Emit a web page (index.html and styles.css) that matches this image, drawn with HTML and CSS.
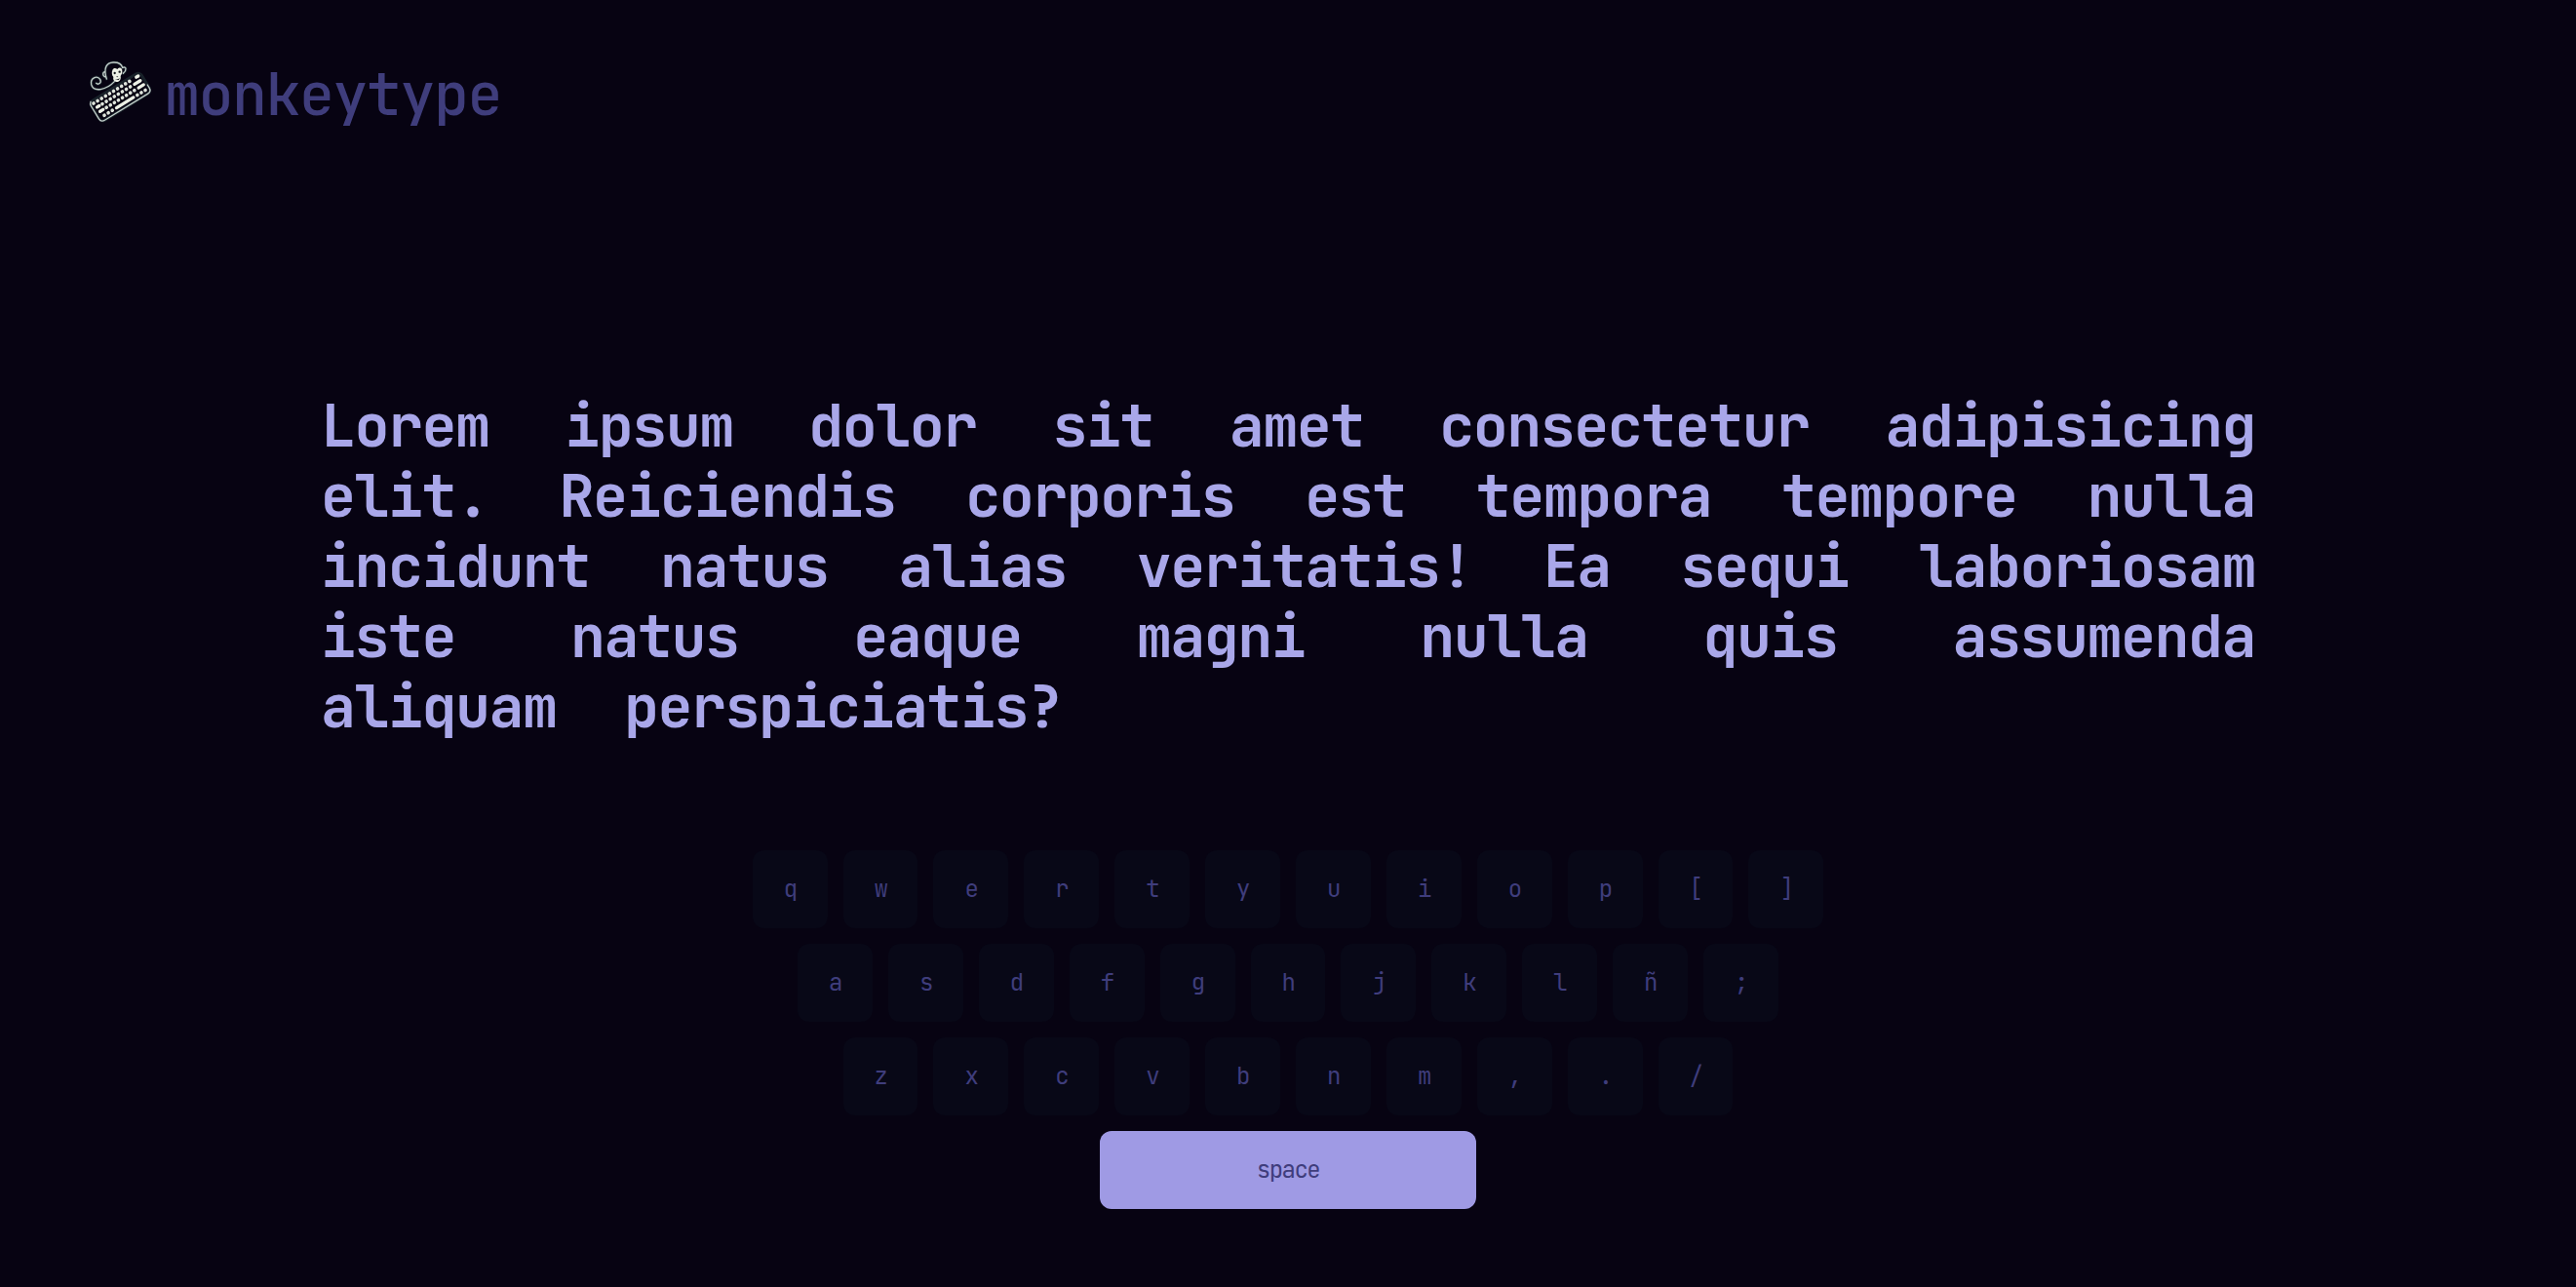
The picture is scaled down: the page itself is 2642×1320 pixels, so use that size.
FILE: index.html
```
<!DOCTYPE html>
<html lang="en">
<head>
<meta charset="utf-8">
<title>monkeytype</title>
<link rel="stylesheet" href="styles.css">
</head>
<body>
<header class="header">
  <svg class="logo" viewBox="0 0 270 255" aria-hidden="true">
    <g class="glow">
      <path d="M112 101C88 127 47 135 41 110C37 91 58 80 68 94C74 106 62 112 56 106"/>
      <path d="M88 93C77 57 89 43 108 42C125 41 134 48 137 58C149 53 151 66 139 76M84 70C74 72 75 86 86 87"/>
      <rect x="-10" y="-9" width="181" height="71" rx="13" transform="translate(48 168) rotate(-31.5)"/>
    </g>
    <g class="line">
      <path d="M112 101C88 127 47 135 41 110C37 91 58 80 68 94C74 106 62 112 56 106"/>
      <path d="M88 93C77 57 89 43 108 42C125 41 134 48 137 58C149 53 151 66 139 76M84 70C74 72 75 86 86 87"/>
      <path transform="translate(48 168) rotate(-31.5)" d="M-5 -9Q-11 -5 -11 3V49Q-11 62 2 62H158Q171 62 171 49V38"/>
    </g>
    <path class="face" d="M106 66C109 58 116 59 121 63C128 55 137 59 136 69C137 76 133 80 131 84C133 94 128 102 120 102C111 102 107 95 109 87C104 81 103 73 106 66Z"/>
    <g class="features"><circle cx="113" cy="75" r="3.5"/><circle cx="128" cy="71" r="3.5"/><path d="M117 86L124 84L121 88ZM114 93Q122 97 128 90L126 95Q120 98 114 93Z"/></g>
    <g transform="translate(48 168) rotate(-31.5)">
      <g class="keys">
        <path d="M0 0H144M22 15.500H124M27 31.500H128M9 48.500H39M128 48.500H159"/>
      </g>
      <g class="wide-keys"><path d="M154 0H161M3 15.500H11M4 31.500H15M138 15.500H159M143 31.500H161M53 48.500H114"/></g>
    </g>
  </svg>
  <h1 class="brand">monkeytype</h1>
</header>
<main>
  <p class="words">Lorem ipsum dolor sit amet consectetur adipisicing elit. Reiciendis corporis est tempora tempore nulla incidunt natus alias veritatis! Ea sequi laboriosam iste natus eaque magni nulla quis assumenda aliquam perspiciatis?</p>
  <section class="keyboard">
    <div class="row"><span class="key">q</span><span class="key">w</span><span class="key">e</span><span class="key">r</span><span class="key">t</span><span class="key">y</span><span class="key">u</span><span class="key">i</span><span class="key">o</span><span class="key">p</span><span class="key">[</span><span class="key">]</span></div>
    <div class="row"><span class="key">a</span><span class="key">s</span><span class="key">d</span><span class="key">f</span><span class="key">g</span><span class="key">h</span><span class="key">j</span><span class="key">k</span><span class="key">l</span><span class="key">ñ</span><span class="key">;</span></div>
    <div class="row"><span class="key">z</span><span class="key">x</span><span class="key">c</span><span class="key">v</span><span class="key">b</span><span class="key">n</span><span class="key">m</span><span class="key">,</span><span class="key">.</span><span class="key">/</span></div>
    <div class="row"><span class="key space">space</span></div>
  </section>
</main>
</body>
</html>
```
FILE: styles.css
```
* { box-sizing: border-box; }

body {
  margin: 0;
  min-height: 1320px;
  background: #070312;
  color: #3f3d7c;
  font-family: "JetBrains Mono", "DejaVu Sans Mono", monospace;
}

.header {
  display: flex;
  align-items: flex-start;
  height: 400.6px;
  padding: 50px 80px 0;
}

.logo {
  width: 90px;
  height: 85px;
  flex: none;
}

.logo path, .logo rect { stroke-linecap: round; }
.glow { fill: none; stroke: #223236; stroke-width: 9; opacity: .65; }
.line { fill: none; stroke: #c3ceca; stroke-width: 4; }
.face { fill: #edf1e6; }
.features { fill: #14191d; }
.keys { fill: none; stroke: #dfe5dc; stroke-width: 11; stroke-dasharray: .1 14.3; }
.wide-keys { fill: none; stroke: #edf1e6; stroke-width: 10; }

.brand {
  margin: 10.6px 0 0 -1px;
  font-size: 60px;
  font-weight: 500;
  line-height: 72px;
  letter-spacing: -1.5px;
}

.words {
  width: 1984px;
  margin: 0 auto;
  color: #a9a7e9;
  font-size: 60px;
  font-weight: 730;
  line-height: 72px;
  letter-spacing: -1.5px;
  word-spacing: 35px;
  text-align: justify;
}

.keyboard {
  display: flex;
  flex-direction: column;
  gap: 16px;
  padding-top: 111.4px;
}

.row {
  display: flex;
  justify-content: center;
  gap: 16px;
}

.key {
  display: flex;
  align-items: center;
  justify-content: center;
  width: 76.9px;
  height: 80px;
  padding-bottom: .6px;
  border-radius: 12px;
  background: #080817;
  font-size: 24px;
  font-weight: 450;
  letter-spacing: -1.5px;
}

.space {
  width: 386px;
  background: #9f9ae4;
}
```
